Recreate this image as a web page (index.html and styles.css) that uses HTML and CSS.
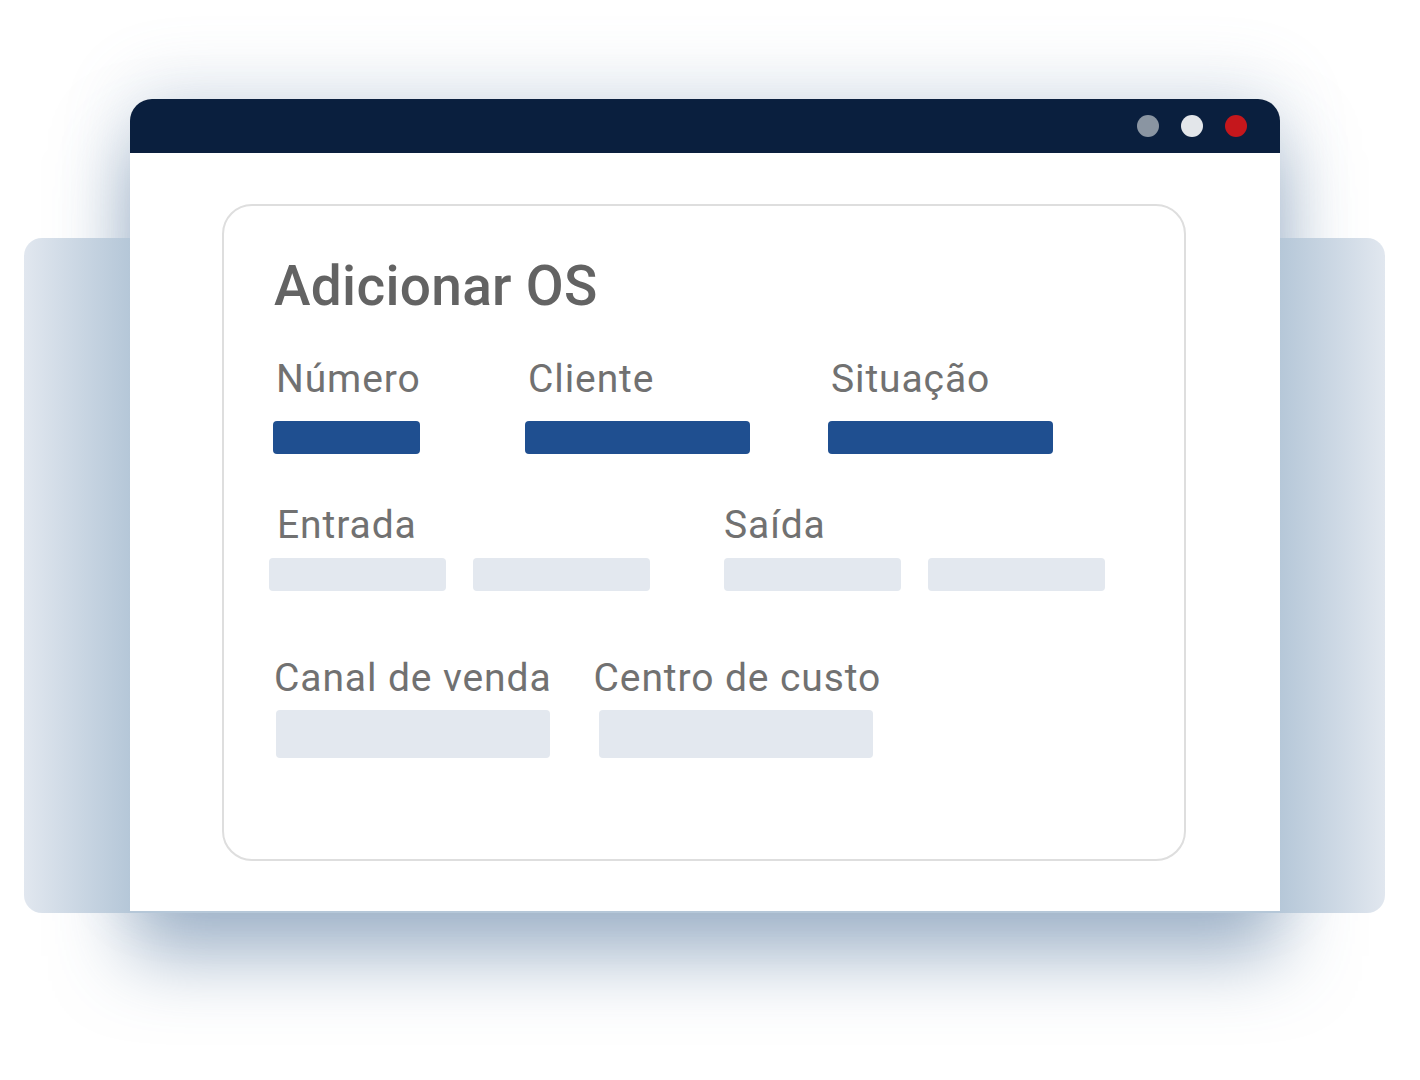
FILE: index.html
```html
<!DOCTYPE html>
<html lang="pt-BR">
<head>
<meta charset="utf-8">
<title>Adicionar OS</title>
<link rel="stylesheet" href="styles.css">
</head>
<body>
<div class="stage">
  <div class="backdrop"></div>
  <div class="window">
    <div class="titlebar">
      <span class="dot dot-grey"></span>
      <span class="dot dot-light"></span>
      <span class="dot dot-red"></span>
    </div>
    <div class="window-body">
      <section class="card">
        <h1 class="card-title">Adicionar OS</h1>

        <div class="row row-main">
          <div class="field">
            <span class="label">Número</span>
            <span class="bar bar-blue bar-short"></span>
          </div>
          <div class="field">
            <span class="label">Cliente</span>
            <span class="bar bar-blue bar-long"></span>
          </div>
          <div class="field">
            <span class="label">Situação</span>
            <span class="bar bar-blue bar-long"></span>
          </div>
        </div>

        <div class="row row-dates">
          <div class="field field-range">
            <span class="label label-in">Entrada</span>
            <div class="pair">
              <span class="bar bar-grey bar-date"></span>
              <span class="bar bar-grey bar-date"></span>
            </div>
          </div>
          <div class="field field-range">
            <span class="label label-out">Saída</span>
            <div class="pair">
              <span class="bar bar-grey bar-date"></span>
              <span class="bar bar-grey bar-date"></span>
            </div>
          </div>
        </div>

        <div class="row row-extra">
          <div class="field">
            <span class="label">Canal de venda</span>
            <span class="bar bar-grey bar-wide"></span>
          </div>
          <div class="field">
            <span class="label">Centro de custo</span>
            <span class="bar bar-grey bar-wide"></span>
          </div>
        </div>
      </section>
    </div>
  </div>
</div>
</body>
</html>
```

FILE: styles.css
```css
* {
  box-sizing: border-box;
}

html, body {
  margin: 0;
  padding: 0;
  background: #ffffff;
}

body {
  font-family: Roboto, "Liberation Sans", Arial, sans-serif;
  width: 1420px;
  height: 1080px;
  overflow: hidden;
}

.stage {
  position: relative;
  isolation: isolate;
  width: 1420px;
  height: 1080px;
  padding: 99px 0 0 130px;
}

/* panel sitting behind the window, above the window's soft shadow */
.backdrop {
  position: absolute;
  z-index: -1;
  left: 24px;
  top: 238px;
  width: 1361px;
  height: 675px;
  border-radius: 18px;
  background: linear-gradient(to right,
    #e1e7ef 0%,
    #b5c7d8 7.8%,
    #b5c7d8 92.2%,
    #e1e7ef 100%);
}

.window {
  position: relative;
  width: 1150px;
  height: 812px;
  display: flex;
  flex-direction: column;
  border-radius: 22px 22px 0 0;
  background: #ffffff;
}

/* soft glow around the window, painted under the backdrop panel */
.window::before {
  content: "";
  position: absolute;
  z-index: -2;
  inset: 0;
  border-radius: 22px 22px 0 0;
  box-shadow:
    0 45px 75px rgba(70, 108, 150, 0.5),
    0 -15px 70px rgba(110, 140, 175, 0.2);
}

.titlebar {
  height: 54px;
  flex: none;
  display: flex;
  align-items: center;
  justify-content: flex-end;
  gap: 22px;
  padding: 0 33px 0 0;
  background: #0a1f3e;
  border-radius: 22px 22px 0 0;
}

.dot {
  width: 22px;
  height: 22px;
  border-radius: 50%;
}

.dot-grey { background: #8a95a2; }
.dot-light { background: #e3e6ea; }
.dot-red { background: #c5171c; }

.window-body {
  flex: 1;
  padding: 51px 0 0 92px;
  background: #ffffff;
}

.card {
  width: 964px;
  height: 657px;
  border: 2px solid #dedede;
  border-radius: 30px;
  padding: 50px 0 0 49px;
  color: #6e6e6e;
}

.card-title {
  margin: 0 0 0 1px;
  font-size: 55px;
  line-height: 60px;
  font-weight: 500;
  color: #636363;
  letter-spacing: 0.3px;
}

.row {
  display: flex;
}

.field {
  display: flex;
  flex-direction: column;
}

.label {
  font-size: 39px;
  line-height: 40px;
  font-weight: 400;
  color: #717171;
  letter-spacing: 0.9px;
}

.bar {
  display: block;
  height: 33px;
  border-radius: 4px;
}

.bar-blue { background: #1f4f90; }
.bar-grey { background: #e3e8ef; }

.bar-short { width: 147px; }
.bar-long { width: 225px; }
.bar-date { width: 177px; }
.bar-wide { width: 274px; height: 48px; }

/* first row: Número / Cliente / Situação */
.row-main {
  margin: 43px 0 0 0;
  display: grid;
  grid-template-columns: 252px 303px 240px;
}

.row-main .label {
  margin: 0 0 22px 3px;
}

/* second row: date ranges */
.row-dates {
  margin: 51px 0 0 -4px;
  gap: 74px;
}

.label-in { margin: 0 0 13px 8px; }
.label-out { margin: 0 0 13px 0; }

.pair {
  display: flex;
  gap: 27px;
}

/* third row: channel and cost center */
.row-extra {
  margin: 67px 0 0 3px;
  gap: 47px;
}

.row-extra .label {
  margin: 0 0 12px -2px;
}

.row-extra .field + .field .label {
  margin-left: -5px;
}
```
